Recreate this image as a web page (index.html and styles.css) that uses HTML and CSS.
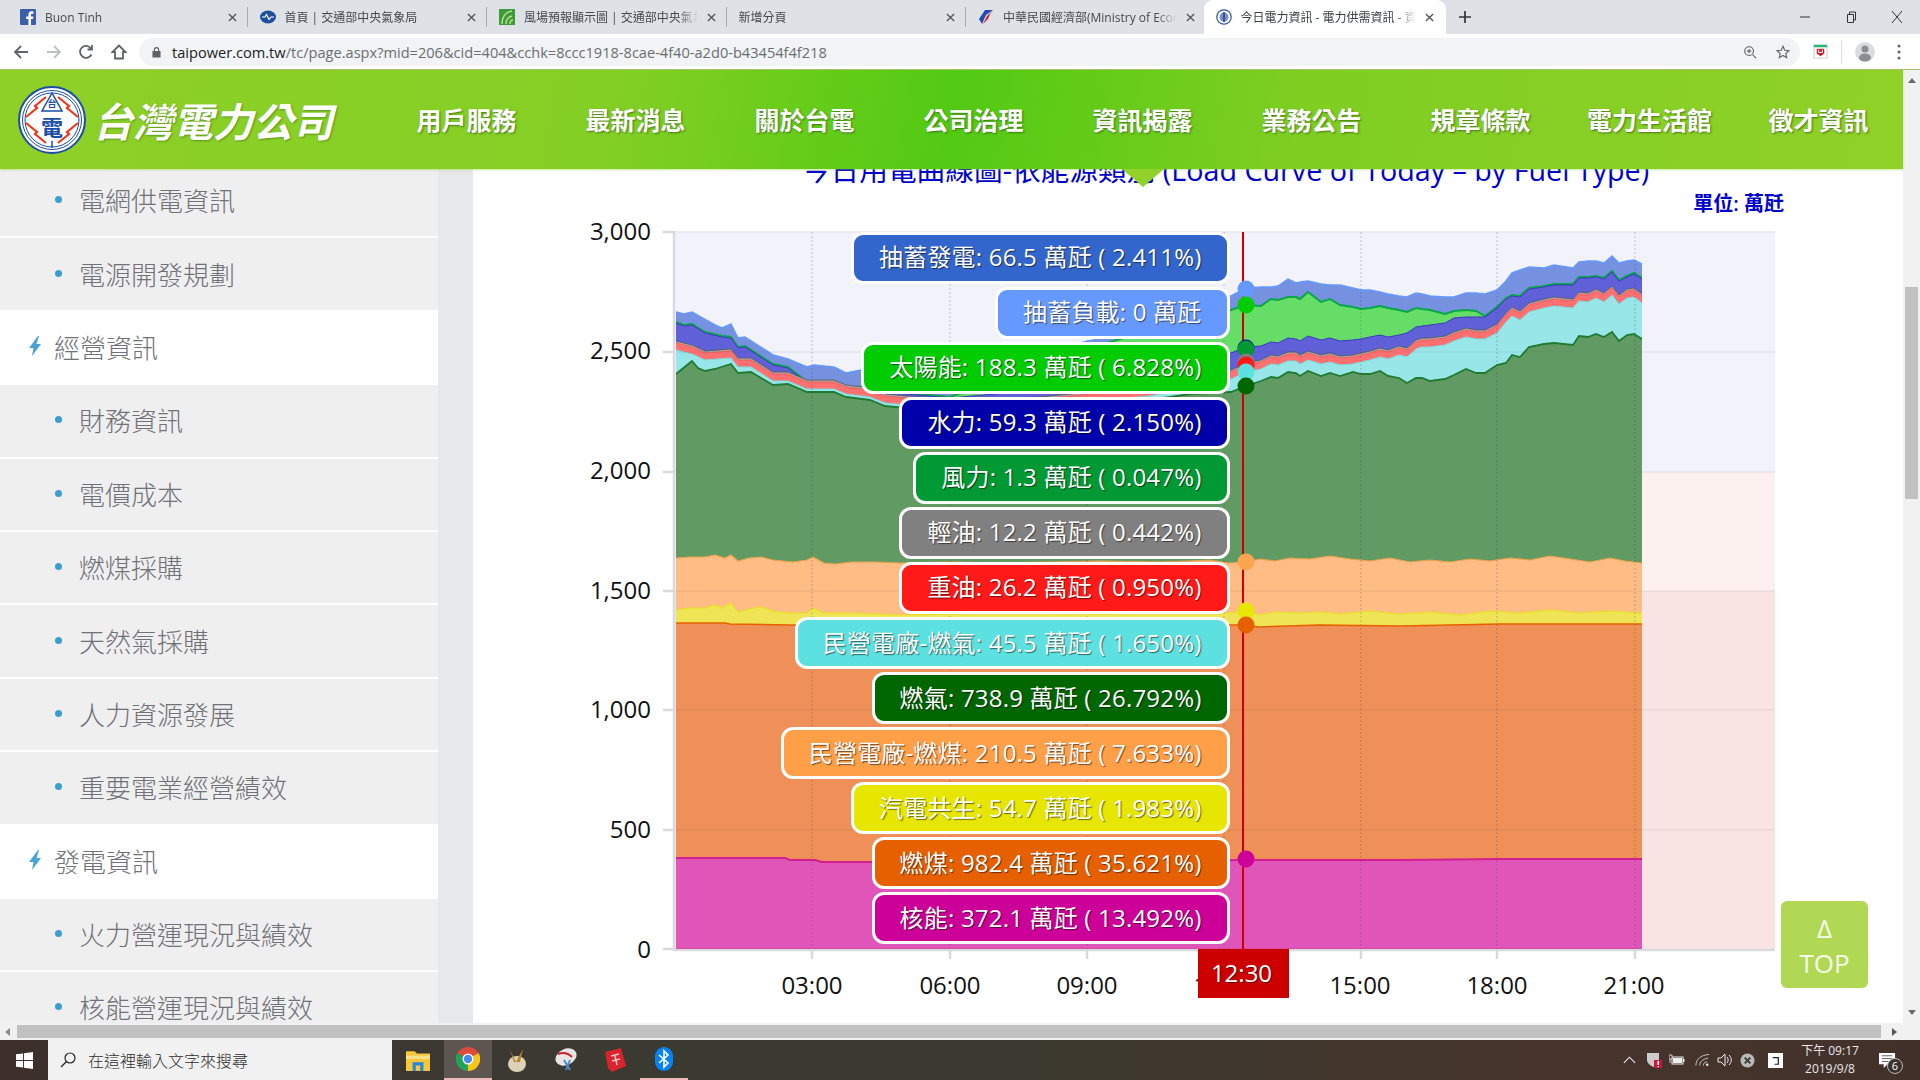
FILE: index.html
```html
<!DOCTYPE html>
<html lang="zh-Hant">
<head>
<meta charset="utf-8">
<title>今日電力資訊 - 電力供需資訊</title>
<link rel="stylesheet" href="styles.css">
</head>
<body>
<div class="tabs">
  <div class="tab">
    <svg class="fav" viewBox="0 0 16 16"><rect width="16" height="16" rx="1" fill="#3b5fa8"/><path d="M11 16V10h2l.4-2.6H11V6c0-.8.3-1.3 1.4-1.3h1.1V2.4C13.2 2.3 12.500 2.300 11.700 2.300 9.800 2.300 8.400 3.500 8.400 5.600v1.800H6.200V10h2.200v6z" fill="#fff"/></svg>
    <span class="tab-title">Buon Tinh</span>
    <svg class="x" viewBox="0 0 10 10"><path d="M1 1l8 8M9 1l-8 8"/></svg>
  </div><i class="sep"></i>
  <div class="tab">
    <svg class="fav" viewBox="0 0 16 16"><ellipse cx="8" cy="8" rx="8" ry="6.500" fill="#1f4e9c"/><path d="M2 8h3l1.500-2.500 2.500 5L11 8h3" fill="none" stroke="#fff" stroke-width="1.200"/></svg>
    <span class="tab-title">首頁 | 交通部中央氣象局</span>
    <svg class="x" viewBox="0 0 10 10"><path d="M1 1l8 8M9 1l-8 8"/></svg>
  </div><i class="sep"></i>
  <div class="tab">
    <svg class="fav" viewBox="0 0 16 16"><rect width="16" height="16" fill="#3f9a3c"/><path d="M3 15C3 7 7 3 13 2M7 15c0-4 2-7 6-8M11 15c0-2 1-4 3-4" fill="none" stroke="#b6e28a" stroke-width="1.500"/></svg>
    <span class="tab-title">風場預報顯示圖 | 交通部中央氣象局</span>
    <svg class="x" viewBox="0 0 10 10"><path d="M1 1l8 8M9 1l-8 8"/></svg>
  </div><i class="sep"></i>
  <div class="tab">
    <span class="tab-title">新增分頁</span>
    <svg class="x" viewBox="0 0 10 10"><path d="M1 1l8 8M9 1l-8 8"/></svg>
  </div><i class="sep"></i>
  <div class="tab">
    <svg class="fav" viewBox="0 0 16 16"><path d="M15 1H7L1 10l3 5 4-9z" fill="#1e50b4"/><path d="M15 1L9 7l-4 8 5-5 2-5z" fill="#d8232a"/></svg>
    <span class="tab-title">中華民國經濟部(Ministry of Economic Affairs)</span>
    <svg class="x" viewBox="0 0 10 10"><path d="M1 1l8 8M9 1l-8 8"/></svg>
  </div>
  <div class="tab tab-active">
    <svg class="fav" viewBox="0 0 16 16"><circle cx="8" cy="8" r="7.200" fill="#fff" stroke="#2a4fa0" stroke-width="1.200"/><circle cx="8" cy="8" r="4.500" fill="#7b8fc8"/><path d="M8 3v10" stroke="#1f3e8c" stroke-width="1.500"/></svg>
    <span class="tab-title">今日電力資訊 - 電力供需資訊 - 資訊揭露</span>
    <svg class="x" viewBox="0 0 10 10"><path d="M1 1l8 8M9 1l-8 8"/></svg>
  </div>
  <svg class="plus" viewBox="0 0 14 14"><path d="M7 0v14M0 7h14"/></svg>
  <div class="winbtns">
    <svg viewBox="0 0 12 12"><path d="M1 6h10"/></svg>
    <svg viewBox="0 0 12 12"><path d="M2.500 3.500h6v8h-6zM4.500 3.500V1h6v8h-2"/></svg>
    <svg viewBox="0 0 12 12"><path d="M1 0l10 12M11 0L1 12"/></svg>
  </div>
</div>

<div class="toolbar">
  <svg class="tb-ic" viewBox="0 0 16 16"><path d="M15 8H2M8 2L2 8l6 6"/></svg>
  <svg class="tb-ic tb-off" viewBox="0 0 16 16"><path d="M1 8h13M8 2l6 6-6 6"/></svg>
  <svg class="tb-ic" viewBox="0 0 16 16"><path d="M13.500 10.500A6 6 0 1 1 13 4.500M14 1v4.500H9.500"/></svg>
  <svg class="tb-ic" viewBox="0 0 16 16"><path d="M8 1.500L1.500 8H4v6.500h8V8h2.500z"/></svg>
  <div class="omni">
    <svg class="lock" viewBox="0 0 10 12"><path d="M2 5V3.500a3 3 0 0 1 6 0V5h1.500v7H.5V5zM3.300 5h3.400V3.500a1.700 1.700 0 0 0-3.400 0z"/></svg>
    <span class="url"><b>taipower.com.tw</b>/tc/page.aspx?mid=206&amp;cid=404&amp;cchk=8ccc1918-8cae-4f40-a2d0-b43454f4f218</span>
    <svg class="om-ic om-zoom" viewBox="0 0 16 16"><circle cx="7" cy="7" r="5"/><path d="M11 11l4 4M7 4.500v5M4.500 7h5"/></svg>
    <svg class="om-ic" viewBox="0 0 16 16"><path d="M8 1.500l2 4.500 4.800.5-3.600 3.200 1 4.800L8 12l-4.200 2.500 1-4.800L1.200 6.500 6 6z"/></svg>
  </div>
  <svg class="ext" viewBox="0 0 16 16"><rect x="1" y="1" width="14" height="14" fill="#fff" stroke="#ccc"/><rect x="1" y="1" width="14" height="2.500" fill="#2bb673"/><path d="M4 5h8v5l-4 3-4-3z" fill="#c8202f"/><path d="M6 6v3h4V6" fill="none" stroke="#fff"/></svg>
  <i class="tb-sep"></i>
  <svg class="avatar" viewBox="0 0 20 20"><circle cx="10" cy="10" r="10" fill="#dadce0"/><circle cx="10" cy="7" r="3.500" fill="#8a8d91"/><ellipse cx="10" cy="15.500" rx="6" ry="4" fill="#8a8d91"/></svg>
  <svg class="menu" viewBox="0 0 4 16"><circle cx="2" cy="2" r="1.500"/><circle cx="2" cy="8" r="1.500"/><circle cx="2" cy="14" r="1.500"/></svg>
</div>

<div class="page">
  <div class="site">
    <header class="head">
      <div class="brand">
        <svg class="logo" viewBox="0 0 68 68">
          <circle cx="34" cy="34" r="33" fill="#fff" stroke="#1b4ea8" stroke-width="2"/>
          <circle cx="34" cy="34" r="29.500" fill="none" stroke="#1b4ea8"/>
          <circle cx="34" cy="34" r="27" fill="none" stroke="#1b4ea8"/>
          <g class="bolts"><path d="M8 31l11-9-2-2 11-9"/><path d="M60 31l-11-9 2-2-11-9"/><path d="M8 37l11 9-2 2 11 9"/><path d="M60 37l-11 9 2 2-11 9"/></g>
          <path d="M34 7L24 25h20zM34 62v-7" fill="none" stroke="#1b4ea8" stroke-width="1.500"/>
          <text class="logo-a" x="34" y="21">台</text>
          <text class="logo-b" x="34" y="50">電</text>
        </svg>
        <span class="wordmark">台灣電力公司</span>
      </div>
      <nav class="nav">
        <a>用戶服務</a><a>最新消息</a><a>關於台電</a><a>公司治理</a><a class="nav-on">資訊揭露</a><a>業務公告</a><a>規章條款</a><a>電力生活館</a><a>徵才資訊</a>
      </nav>
    </header>
    <div class="body">
      <aside class="side">
        <ul class="menu-list">
          <li class="sub">電網供電資訊</li>
          <li class="sub">電源開發規劃</li>
          <li class="top"><svg class="bolt" viewBox="0 0 12 20"><path d="M9 0L0 12h4.500L3 20 12 8H7.500L10 0z"/></svg>經營資訊</li>
          <li class="sub">財務資訊</li>
          <li class="sub">電價成本</li>
          <li class="sub">燃煤採購</li>
          <li class="sub">天然氣採購</li>
          <li class="sub">人力資源發展</li>
          <li class="sub">重要電業經營績效</li>
          <li class="top"><svg class="bolt" viewBox="0 0 12 20"><path d="M9 0L0 12h4.500L3 20 12 8H7.500L10 0z"/></svg>發電資訊</li>
          <li class="sub">火力營運現況與績效</li>
          <li class="sub">核能營運現況與績效</li>
        </ul>
      </aside>
      <div class="band"></div>
      <main class="content">
        <svg class="chart" viewBox="473 169 1430 854" width="1430" height="854">
          <defs>
            <clipPath id="plot"><rect x="676" y="200" width="966" height="749"/></clipPath>
            <path id="cy" d="M670,949V350L676,350 692,354 705,360 731,358 738,367 751,367 773,381 788,381 807,389 834,389 846,394 870,397 885,403 950,409 1040,406 1100,400 1150,396 1170,392 1190,388 1231,379 1246,372 1261,369 1271,364 1278,365 1288,361 1296,361 1300,364 1308,360 1321,364 1330,362 1340,365 1353,364 1361,362 1370,360 1380,357 1388,359 1399,355 1407,357 1416,349 1422,347 1430,347 1445,345 1454,341 1466,337 1476,339 1485,339 1497,333 1506,322 1512,316 1520,320 1529,312 1544,308 1554,306 1573,308 1579,301 1588,302 1596,298 1604,302 1612,295 1619,304 1627,298 1634,297 1642,303L1648,303V949Z"/>
          </defs>
          <rect class="b1" x="674" y="232" width="1101" height="240"/>
          <rect class="b2" x="674" y="472" width="1101" height="119"/>
          <rect class="b3" x="674" y="591" width="1101" height="358"/>
          <g class="grid-under">
            <path d="M674 232H1775"/>
          </g>
          <g clip-path="url(#plot)">
            <path class="s-pump" d="M670,949V312L676,312 684,314 692,312 715,325 722,328 731,324 738,338 745,337 773,355 788,359 807,367 814,365 834,367 846,373 861,370 880,375 950,380 1000,368 1050,350 1093,340 1150,320 1190,305 1231,296 1246,288 1261,287 1271,287 1278,286 1288,279 1296,283 1300,282 1308,281 1321,284 1330,285 1340,285 1353,288 1361,290 1370,290 1380,292 1388,294 1399,296 1407,297 1416,293 1422,294 1430,296 1445,297 1454,297 1466,293 1476,293 1485,294 1497,290 1506,281 1512,273 1520,270 1529,267 1544,268 1554,265 1573,268 1579,262 1588,261 1596,261 1604,263 1612,256 1619,263 1627,261 1634,260 1642,264L1648,264V949Z"/>
            <path class="s-solar" d="M670,949V322L676,322 684,325 692,324 705,332 722,336 731,337 738,347 745,346 773,364 788,367 807,382 834,383 846,387 870,387 885,391 950,397 1000,380 1050,365 1100,345 1150,330 1190,318 1231,310 1246,305 1261,306 1271,299 1278,300 1288,297 1296,297 1300,299 1308,292 1321,302 1330,299 1340,305 1353,307 1361,309 1370,308 1380,306 1388,308 1399,310 1407,312 1416,308 1422,309 1430,310 1445,314 1454,311 1466,310 1476,311 1485,316 1497,307 1506,298 1512,295 1520,296 1529,288 1544,286 1554,284 1573,284 1579,277 1588,277 1596,276 1604,278 1612,271 1619,280 1627,276 1634,273 1642,278L1648,278V949Z"/>
            <path class="s-hydro" d="M670,949V323L676,323 684,326 692,325 705,333 722,337 731,338 738,348 745,347 773,365 788,368 807,383 834,384 846,388 870,388 885,392 950,398 1040,390 1100,378 1150,370 1190,360 1231,353 1246,347 1261,346 1271,342 1278,343 1288,338 1296,339 1300,341 1308,336 1321,340 1330,338 1340,341 1353,340 1361,339 1370,337 1380,335 1388,337 1399,335 1407,333 1416,327 1422,326 1430,325 1445,323 1454,318 1466,317 1476,317 1485,317 1497,308 1506,299 1512,296 1520,297 1529,289 1544,287 1554,285 1573,285 1579,278 1588,278 1596,277 1604,279 1612,272 1619,281 1627,277 1634,274 1642,279L1648,279V949Z"/>
            <use class="s-diesel" href="#cy" transform="translate(0,-9)"/>
            <use class="s-oil" href="#cy" transform="translate(0,-7)"/>
            <use class="s-ipp-gas" href="#cy"/>
            <path class="s-gas" d="M670,949V374L676,374 692,361 698,368 705,371 715,369 731,364 738,373 751,372 773,385 788,384 807,392 834,392 846,397 870,400 885,406 950,412 1040,410 1100,404 1150,400 1190,394 1231,392 1246,386 1261,381 1271,377 1278,378 1288,372 1296,373 1300,376 1308,371 1321,376 1330,373 1340,376 1353,372 1361,374 1370,374 1380,371 1388,376 1399,378 1407,383 1416,378 1422,378 1430,381 1445,379 1454,375 1466,369 1476,373 1485,373 1497,365 1506,363 1512,355 1520,357 1529,347 1544,344 1554,343 1573,345 1579,336 1588,337 1596,334 1604,337 1612,332 1619,341 1627,335 1634,334 1642,339L1648,339V949Z"/>
            <path class="s-ipp-coal" d="M670,949V558L676,558 690,557 705,557 715,555 725,558 731,555 738,561 749,558 761,557 773,560 793,562 807,560 813,557 824,563 836,564 851,562 875,562 900,563 950,562 1000,563 1050,562 1100,561 1160,562 1190,561 1209,560 1229,563 1246,562 1260,559 1275,561 1290,558 1310,559 1330,556 1350,559 1370,561 1390,558 1410,562 1430,560 1450,562 1470,559 1490,561 1510,558 1530,560 1550,556 1570,559 1590,562 1610,558 1625,561 1642,563L1648,563V949Z"/>
            <path class="s-cogen" d="M670,949V610L676,610 690,608 705,608 715,605 722,608 731,603 738,612 754,608 761,607 773,611 788,613 807,613 813,608 824,613 851,613 900,615 950,614 1000,613 1100,614 1180,613 1229,613 1246,611 1260,615 1275,612 1300,613 1320,612 1340,614 1370,611 1400,614 1430,612 1460,615 1490,611 1520,613 1550,610 1580,613 1610,611 1642,613L1648,613V949Z"/>
            <path class="s-coal" d="M670,949V623L676,623 725,623 730,624 788,625 900,626 1000,626 1100,625 1246,625 1258,627 1320,625 1400,626 1500,624 1642,624L1648,624V949Z"/>
            <path class="s-nuke" d="M670,949V858L676,858 785,858 790,860 815,860 822,862 900,862 1000,862 1100,861 1246,860 1400,860 1500,859 1642,859L1648,859V949Z"/>
          </g>
          <g class="grid">
            <path d="M674 352H1775M674 472H1775M674 591H1775M674 710H1775M674 830H1775"/>
          </g>
          <g class="vgrid">
            <path d="M812 232V949M950 232V949M1087 232V949M1224 232V949M1361 232V949M1497 232V949M1635 232V949"/>
          </g>
          <g class="axes">
            <path d="M674 231V951M674 950H1775"/>
            <path d="M663 232H674M663 352H674M663 472H674M663 591H674M663 710H674M663 830H674M663 949H674"/>
            <path d="M812 950V959M950 950V959M1087 950V959M1361 950V959M1497 950V959M1635 950V959"/>
          </g>
          <text class="title" x="1225.500" y="181">今日用電曲線圖-依能源類別 (Load Curve of Today – by Fuel Type)</text>
          <text class="unit" x="1784" y="211">單位: 萬瓩</text>
          <g class="ylab">
            <text x="651" y="240">3,000</text><text x="651" y="359">2,500</text><text x="651" y="479">2,000</text><text x="651" y="599">1,500</text><text x="651" y="718">1,000</text><text x="651" y="838">500</text><text x="651" y="958">0</text>
          </g>
          <g class="xlab">
            <text x="812" y="994">03:00</text><text x="950" y="994">06:00</text><text x="1087" y="994">09:00</text><text x="1224" y="994">12:00</text><text x="1360" y="994">15:00</text><text x="1497" y="994">18:00</text><text x="1634" y="994">21:00</text>
          </g>
          <path class="cross" d="M1243 232V949"/>
          <g class="marks">
            <circle class="m-pump" cx="1246" cy="289" r="8.500"/>
            <circle class="m-solar" cx="1246" cy="305" r="8.500"/>
            <circle class="m-hydro" cx="1246" cy="348" r="8.500"/>
            <circle class="m-wind" cx="1246" cy="349" r="8.500"/>
            <circle class="m-diesel" cx="1246" cy="362" r="8.500"/>
            <circle class="m-oil" cx="1246" cy="365" r="8.500"/>
            <circle class="m-ippgas" cx="1246" cy="372" r="8.500"/>
            <circle class="m-gas" cx="1246" cy="386" r="8.500"/>
            <circle class="m-ippcoal" cx="1246" cy="562" r="8.500"/>
            <circle class="m-cogen" cx="1246" cy="611" r="8.500"/>
            <circle class="m-coal" cx="1246" cy="625" r="8.500"/>
            <circle class="m-nuke" cx="1246" cy="859" r="8.500"/>
          </g>
        </svg>
        <div class="tips">
          <div class="tip t-pump">抽蓄發電: 66.5 萬瓩 ( 2.411%)</div>
          <div class="tip t-load">抽蓄負載: 0 萬瓩</div>
          <div class="tip t-solar">太陽能: 188.3 萬瓩 ( 6.828%)</div>
          <div class="tip t-hydro">水力: 59.3 萬瓩 ( 2.150%)</div>
          <div class="tip t-wind">風力: 1.3 萬瓩 ( 0.047%)</div>
          <div class="tip t-diesel">輕油: 12.2 萬瓩 ( 0.442%)</div>
          <div class="tip t-oil">重油: 26.2 萬瓩 ( 0.950%)</div>
          <div class="tip t-ippgas">民營電廠-燃氣: 45.5 萬瓩 ( 1.650%)</div>
          <div class="tip t-gas">燃氣: 738.9 萬瓩 ( 26.792%)</div>
          <div class="tip t-ippcoal">民營電廠-燃煤: 210.5 萬瓩 ( 7.633%)</div>
          <div class="tip t-cogen">汽電共生: 54.7 萬瓩 ( 1.983%)</div>
          <div class="tip t-coal">燃煤: 982.4 萬瓩 ( 35.621%)</div>
          <div class="tip t-nuke">核能: 372.1 萬瓩 ( 13.492%)</div>
        </div>
        <div class="time-tip">12:30</div>
        <div class="to-top"><span>Δ</span><span>TOP</span></div>
      </main>
    </div>
  </div>
  <div class="vbar">
    <i class="arr arr-up"></i>
    <i class="vthumb"></i>
    <i class="arr arr-down"></i>
  </div>
</div>

<div class="hbar">
  <i class="arr arr-left"></i>
  <i class="hthumb"></i>
  <i class="arr arr-right"></i>
  <i class="corner"></i>
</div>

<div class="taskbar">
  <div class="start"><svg viewBox="0 0 18 18"><path d="M0 2.500l7.500-1v7H0zM8.500 1.300L18 0v8.500H8.500zM0 9.500h7.500v7L0 15.500zM8.500 9.500H18V18l-9.500-1.300z"/></svg></div>
  <div class="search">
    <svg viewBox="0 0 16 16"><circle cx="10" cy="6" r="5"/><path d="M6.500 9.500L1 15"/></svg>
    <span>在這裡輸入文字來搜尋</span>
  </div>
  <div class="apps">
    <div class="app app-first"><svg viewBox="0 0 22 20"><path d="M0 2h8l2 2h12v16H0z" fill="#f6c63c"/><rect y="6" width="22" height="3" fill="#fbe08a"/><rect x="6" y="12" width="10" height="8" fill="#2a8ad6"/><rect x="9" y="15" width="4" height="5" fill="#f6c63c"/></svg></div>
    <div class="app app-on"><svg viewBox="0 0 24 24"><circle cx="12" cy="12" r="12" fill="#dd4b3e"/><path d="M12 12L22.500 6A12 12 0 0 1 12 24z" fill="#f5c518"/><path d="M12 12v12A12 12 0 0 1 1.500 6z" fill="#1fa45a"/><circle cx="12" cy="12" r="5.500" fill="#fff"/><circle cx="12" cy="12" r="4.200" fill="#4a8af0"/></svg></div>
    <div class="app"><svg viewBox="0 0 20 24"><ellipse cx="10" cy="16" rx="9" ry="8" fill="#ddd2b8"/><path d="M3 2l6 12 2-4 5-9-3 13H7z" fill="#b5852e"/></svg></div>
    <div class="app"><svg viewBox="0 0 24 24"><ellipse cx="12" cy="9" rx="11" ry="8" fill="#e8e4e4" transform="rotate(-25 12 9)"/><path d="M4 6c5-2 10-1 14 3" stroke="#c22" stroke-width="2" fill="none"/><path d="M10 12l6 10M16 12l-4 10" stroke="#4a8ac8" stroke-width="2"/></svg></div>
    <div class="app"><svg viewBox="0 0 22 24"><path d="M1 4L17 0l5 18-14 6-4-4z" fill="#d8242c"/><path d="M7 8l8-2M8 13l8-2M11 8l2 9" stroke="#f6c6c6" stroke-width="1.500" fill="none"/></svg></div>
    <div class="app app-mark"><svg viewBox="0 0 18 24"><rect width="18" height="24" rx="9" fill="#0a82f0"/><path d="M4 8l9 8-4 4V4l4 4-9 8" fill="none" stroke="#fff" stroke-width="1.600"/></svg></div>
  </div>
  <div class="tray">
    <svg class="t-ic" viewBox="0 0 14 8"><path d="M1 7l6-6 6 6" fill="none" stroke="#eee" stroke-width="1.200"/></svg>
    <svg class="t-shield" viewBox="0 0 16 16"><path d="M1 1h12v7c0 3-3 5-6 7-3-2-6-4-6-7z" fill="#ccc"/><rect x="8" y="8" width="8" height="8" fill="#c8193c"/><rect x="11.500" y="9" width="1.500" height="4" fill="#fff"/><rect x="11.500" y="14" width="1.500" height="1.200" fill="#fff"/></svg>
    <svg class="t-batt" viewBox="0 0 16 12"><rect x="3" y="3" width="11" height="7" fill="none" stroke="#eee"/><rect x="4" y="4" width="9" height="5" fill="#eee"/><rect x="14" y="5" width="1.500" height="3" fill="#eee"/><path d="M0 1h3v4H0zM1 5v4" fill="#3a3a30" stroke="#eee" stroke-width=".8"/></svg>
    <svg class="t-wifi" viewBox="0 0 16 14"><path d="M1 13C1 6 6 2 15 1M5 13c0-4 3-7 9-8M9 13c0-2 1-4 4-4" fill="none" stroke="#ccc" stroke-width="1"/><circle cx="13" cy="12" r="1.300" fill="#eee"/></svg>
    <svg class="t-vol" viewBox="0 0 16 14"><path d="M1 5h3l4-4v12l-4-4H1zM10 4c1.500 2 1.500 4 0 6M12 2c3 3 3 7 0 10" fill="none" stroke="#eee" stroke-width="1"/></svg>
    <svg class="t-x" viewBox="0 0 16 16"><circle cx="8" cy="8" r="7.500" fill="#b8b8b8"/><path d="M5 5l6 6M11 5l-6 6" stroke="#3a3a30" stroke-width="2"/></svg>
    <svg class="t-box" viewBox="0 0 16 16"><rect width="16" height="16" fill="#fff"/><path d="M5 5h6v7H7" fill="none" stroke="#222" stroke-width="1.300"/></svg>
    <div class="clock"><span>下午 09:17</span><span>2019/9/8</span></div>
    <div class="notif">
      <svg viewBox="0 0 18 18"><path d="M0 1h17v12h-8l-4 4v-4H0z" fill="#fff"/><path d="M3 4h11M3 7h11M3 10h7" stroke="#555" stroke-width="1"/></svg>
      <b class="badge">6</b>
    </div>
  </div>
</div>
</body>
</html>
```
FILE: styles.css
```css
* { box-sizing: border-box; }
html, body { margin: 0; height: 100%; }
body {
  width: 1920px; height: 1080px; overflow: hidden;
  display: flex; flex-direction: column;
  font-family: "Open Sans", "Noto Sans CJK TC", sans-serif;
  background: #fff;
}
i { display: block; font-style: normal; }

/* tabs */
.tabs { height: 34px; flex: none; background: #dee1e6; display: flex; align-items: center; padding-left: 8px; color: #45484d; font-size: 12px; }
.tab { width: 238.500px; height: 34px; display: flex; align-items: center; gap: 9px; padding: 0 10px 0 12px; flex: none; }
.tab-active { width: 242px; margin-left: -1px; padding-right: 12px; background: #fff; border-radius: 9px 9px 0 0; color: #3c4043; }
.fav { width: 16px; height: 16px; flex: none; }
.tab-title { flex: 1; min-width: 0; white-space: nowrap; overflow: hidden; -webkit-mask-image: linear-gradient(90deg, #000 88%, transparent); mask-image: linear-gradient(90deg, #000 88%, transparent); }
.x { width: 9px; height: 9px; flex: none; fill: none; stroke: #555; stroke-width: 1.500; }
.sep { width: 1px; height: 20px; background: #a6a9ad; flex: none; }
.plus { width: 12px; height: 12px; margin-left: 13px; stroke: #333; stroke-width: 2; fill: none; flex: none; }
.winbtns { margin-left: auto; display: flex; gap: 34px; padding-right: 17px; align-items: center; }
.winbtns svg { width: 12px; height: 12px; fill: none; stroke: #333; stroke-width: 1; }

/* toolbar */
.toolbar { height: 36px; flex: none; background: #fff; display: flex; align-items: center; padding-left: 13px; border-bottom: 1px solid #a9c06a; }
.tb-ic { width: 16px; height: 16px; fill: none; stroke: #5f6368; stroke-width: 1.800; margin-right: 16.500px; flex: none; }
.tb-off { stroke: #bdc1c6; }
.omni { width: 1661px; height: 28px; margin-left: -4px; background: #f1f3f4; border-radius: 14px; display: flex; align-items: center; padding-left: 13px; flex: none; }
.lock { width: 9px; height: 12px; fill: #5f6368; flex: none; margin-right: 11px; }
.url { font-size: 14.600px; color: #6a6e73; white-space: nowrap; font-family: "Open Sans", sans-serif; }
.url b { color: #202124; font-weight: 400; }
.om-ic { width: 14px; height: 14px; fill: none; stroke: #5f6368; stroke-width: 1.300; flex: none; }
.om-zoom { margin-left: auto; margin-right: 19px; }
.om-ic:last-child { margin-right: 10px; }
.ext { width: 15px; height: 15px; margin-left: 13px; flex: none; }
.tb-sep { width: 1px; height: 22px; background: #dadce0; margin: 0 13px; flex: none; }
.avatar { width: 20px; height: 20px; flex: none; }
.menu { width: 4px; height: 16px; fill: #5f6368; margin-left: 22px; flex: none; }

/* page */
.page { flex: 1; min-height: 0; display: flex; }
.site { flex: 1; min-width: 0; display: flex; flex-direction: column; }
.head { height: 99px; flex: none; display: flex; position: relative; z-index: 5;
  background: linear-gradient(100deg, #8fd027 0%, #84cf25 32%, #52ca13 50%, #7fce22 68%, #90d127 100%);
  box-shadow: 0 1px 2px rgba(150, 210, 50, .5); }
.brand { width: 382px; flex: none; display: flex; align-items: center; padding-left: 18px; }
.logo { width: 68px; height: 68px; flex: none; }
.bolts path { fill: none; stroke: #e8381c; stroke-width: 2.200; }
.logo-a, .logo-b { text-anchor: middle; fill: #1b4ea8; font-family: "Noto Sans CJK TC", sans-serif; font-weight: 700; }
.logo-a { font-size: 9px; }
.logo-b { font-size: 22px; }
.wordmark { margin-left: 7px; font-family: "Noto Sans CJK TC", sans-serif; font-size: 40px; font-weight: 700; color: #fff; font-style: italic; white-space: nowrap; text-shadow: 1px 1px 2px rgba(60, 110, 20, .6); }
.nav { flex: 1; display: grid; grid-template-columns: repeat(9, 1fr); align-items: center; }
.nav a { position: relative; height: 99px; display: flex; align-items: center; justify-content: center; color: #fff; font-family: "Noto Sans CJK TC", sans-serif; font-size: 25px; font-weight: 700; padding-bottom: 2px; text-shadow: 1px 1px 2px rgba(50, 90, 20, .75); white-space: nowrap; }
.nav-on::after { content: ""; position: absolute; left: 50%; top: 99px; margin-left: -21px; border: 21px solid transparent; border-top: 18px solid #92d02a; border-bottom: 0; }

.body { flex: 1; min-height: 0; display: flex; }
.side { width: 438px; flex: none; overflow: hidden; background: #fff; }
.menu-list { list-style: none; margin: -4px 0 0; padding: 0; display: grid; grid-auto-rows: 73.400px; }
.menu-list li { display: flex; align-items: center; padding-bottom: 2px; border-bottom: 2.500px solid #fff; font-family: "Noto Sans CJK TC", sans-serif; font-size: 26px; font-weight: 300; color: #6f7276; }
.sub { background: #efeff0; padding-left: 55px; position: relative; }
.sub::before { content: ""; width: 7px; height: 7px; border-radius: 50%; background: #3d9dd1; margin-right: 17px; flex: none; }
.top { background: #fff; padding-left: 29px; border-bottom-color: #efeff0; }
.bolt { width: 12px; height: 20px; fill: #46a3d8; margin-right: 13px; flex: none; }
.band { width: 35px; flex: none; background: #e7e8ea; }
.content { flex: 1; min-width: 0; position: relative; overflow: hidden; background: #fff; }
.chart { display: block; }

/* chart */
.b1 { fill: #f2f2fb; } .b2 { fill: #fdf1ef; } .b3 { fill: #fae3e3; }
.grid-under path { stroke: #e6e6ee; stroke-width: 1.500; fill: none; }
.grid path { stroke: rgba(40, 40, 60, .05); stroke-width: 2; fill: none; }
.vgrid path { stroke: rgba(70, 70, 90, .3); stroke-width: 1; stroke-dasharray: 2 2; fill: none; }
.axes path { stroke: #d9d9e0; stroke-width: 2.500; fill: none; }
.s-pump { fill: #7591e0; stroke: #6699ff; stroke-width: 1.500; }
.s-solar { fill: #66dd66; stroke: #08a848; stroke-width: 2; }
.s-hydro { fill: #6060d8; stroke: #3a3ac0; stroke-width: 1; }
.s-diesel { fill: #aaa; stroke: #555; stroke-width: .8; }
.s-oil { fill: #ff7070; stroke: #ff5050; stroke-width: .8; }
.s-ipp-gas { fill: #99e6e8; stroke: #7adcde; stroke-width: 1; }
.s-gas { fill: #619b63; stroke: #1f7a32; stroke-width: 1.800; }
.s-ipp-coal { fill: #ffbd85; stroke: #e9a24a; stroke-width: 1.200; }
.s-cogen { fill: #efe455; stroke: #e6e020; stroke-width: 1.200; }
.s-coal { fill: #ef9058; stroke: #e66000; stroke-width: 1.500; }
.s-nuke { fill: #e055b8; stroke: #d21f90; stroke-width: 2; }
.title { font-size: 28.700px; fill: #0000cc; text-anchor: middle; }
.unit { font-size: 20px; fill: #0000cc; text-anchor: end; font-weight: 600; }
.ylab text { font-size: 24px; fill: #111; text-anchor: end; }
.xlab text { font-size: 24px; fill: #111; text-anchor: middle; }
.cross { stroke: #cc0000; stroke-width: 2; fill: none; }
.m-pump { fill: #6699ff; } .m-solar { fill: #00cc00; } .m-hydro { fill: #0000aa; } .m-wind { fill: #009933; }
.m-diesel { fill: #808080; } .m-oil { fill: #ff1919; } .m-ippgas { fill: #5ce0e0; } .m-gas { fill: #006600; }
.m-ippcoal { fill: #ffa552; } .m-cogen { fill: #e6e600; } .m-coal { fill: #e66000; } .m-nuke { fill: #cc0099; }

.tips { position: absolute; top: 62.500px; right: 673.500px; display: flex; flex-direction: column; align-items: flex-end; gap: 3.080px; }
.tip { height: 52px; display: flex; align-items: center; padding: 0 25px 4px; border: 3.500px solid #fff; border-radius: 12px; color: #fff; font-size: 24px; letter-spacing: .2px; white-space: pre; text-shadow: 1px 1px 1px rgba(0, 0, 0, .55); }
.t-pump { background: #3366cc; } .t-load { background: #6699ff; } .t-solar { background: #00cc00; } .t-hydro { background: #0000aa; }
.t-wind { background: #009933; } .t-diesel { background: #808080; } .t-oil { background: #ff1919; } .t-ippgas { background: #5ce0e0; }
.t-gas { background: #006600; } .t-ippcoal { background: #ff9f48; } .t-cogen { background: #e6e600; } .t-coal { background: #e66000; } .t-nuke { background: #cc0099; }
.time-tip { position: absolute; left: 725px; top: 780px; width: 91px; height: 49px; background: #cc0000; color: #fff; font-size: 24px; display: flex; align-items: center; justify-content: center; padding: 0 4px 2px 0; text-shadow: 1px 1px 1px rgba(0, 0, 0, .5); }
.to-top { position: absolute; left: 1308px; top: 732px; width: 87px; height: 87px; border-radius: 6px; background: #b0d855; color: #f6fbe8; display: flex; flex-direction: column; align-items: center; justify-content: center; font-size: 26px; line-height: 36px; }
.to-top span { display: block; height: 35px; }

/* scrollbars */
.vbar { width: 17px; flex: none; background: #f1f1f1; display: flex; flex-direction: column; align-items: center; padding-top: 8px; position: relative; }
.vthumb { width: 13px; height: 212px; background: #c1c1c1; margin-top: 204px; }
.arr { width: 0; height: 0; border: 4px solid transparent; flex: none; }
.arr-up { border-bottom: 5px solid #6a6a6a; border-top: 0; }
.arr-down { border-top: 5px solid #6a6a6a; border-bottom: 0; margin-top: auto; margin-bottom: 8px; }
.hbar { height: 17px; flex: none; background: #f1f1f1; display: flex; align-items: center; padding-left: 5px; }
.arr-left { border-right: 5px solid #8a8a8a; border-left: 0; }
.hthumb { width: 1864px; height: 13px; background: #c1c1c1; margin-left: 7px; }
.arr-right { border-left: 5px solid #555; border-right: 0; margin-left: 11px; }
.corner { width: 1px; }

/* taskbar */
.taskbar { height: 40px; flex: none; display: flex; align-items: stretch; color: #fff; background: linear-gradient(90deg, #3c2f2c 0%, #3b3a32 30%, #3a3a30 50%, #47352c 80%, #42312b 100%); }
.start { width: 48px; display: flex; align-items: center; justify-content: center; flex: none; }
.start svg { width: 17px; height: 17px; fill: #fff; }
.search { width: 344px; flex: none; background: #f1f1f1; color: #2e2e2e; display: flex; align-items: center; gap: 12px; padding-left: 12px; font-size: 16px; font-family: "Noto Sans CJK TC", sans-serif; font-weight: 300; }
.search svg { width: 16px; height: 16px; fill: none; stroke: #222; stroke-width: 1.200; flex: none; }
.apps { display: flex; margin-left: 0; }
.app { width: 48px; display: flex; align-items: center; justify-content: center; flex: none; margin-right: 1px; }
.app svg { width: 24px; height: 24px; }
.app-first { margin-left: 2px; }
.app-on { background: #5c5550; border-bottom: 2px solid #ecb8b8; margin-left: 1px; }
.app-mark { border-bottom: 2px solid #ecb8b8; }
.tray { margin-left: auto; display: flex; align-items: center; position: relative; padding-right: 5px; }
.tray svg { flex: none; }
.t-ic { width: 13px; height: 8px; margin-right: 10px; }
.t-shield { width: 16px; height: 16px; margin-right: 7px; }
.t-batt { width: 16px; height: 12px; margin-right: 10px; }
.t-wifi { width: 15px; height: 14px; margin-right: 7px; }
.t-vol { width: 16px; height: 14px; margin-right: 7px; }
.t-x { width: 15px; height: 15px; margin-right: 13px; }
.t-box { width: 15px; height: 15px; margin-right: 8px; }
.clock { width: 78px; display: flex; flex-direction: column; align-items: center; font-size: 12px; line-height: 18px; font-family: "Open Sans", "Noto Sans CJK TC", sans-serif; color: #e8e8e8; }
.notif { width: 36px; margin-left: 10px; position: relative; }
.notif svg { width: 17px; height: 17px; display: block; }
.badge { position: absolute; left: 8px; top: 6px; width: 16px; height: 16px; border: 1px solid #bbb; border-radius: 50%; background: #3a302c; font-size: 11px; font-weight: 400; line-height: 14px; text-align: center; }
```
